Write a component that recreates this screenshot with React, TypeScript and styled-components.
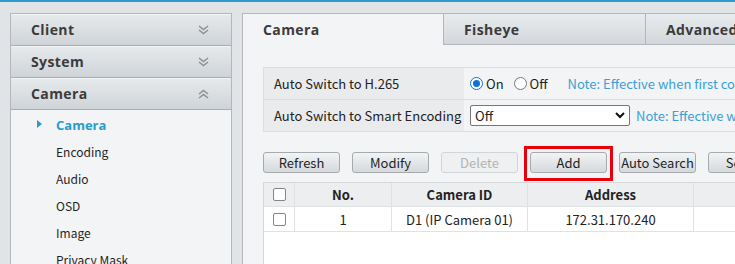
import React from "react";
import styled, { createGlobalStyle } from "styled-components";

const Global = createGlobalStyle`
  html, body { margin: 0; padding: 0; background: #e0e4e7; overflow: hidden; }
  body { font-family: "Noto Sans CJK SC", "Noto Sans", sans-serif; font-size: 13px; color: #222; }
  * { box-sizing: border-box; }
`;

const TopBar = styled.div`
  height: 2px;
  background: #2a9bcb;
`;

const Page = styled.div`
  display: flex;
  gap: 10px;
  padding: 11px 0 0 10px;
  height: 262px;
  overflow: hidden;
`;

const Sidebar = styled.div`
  width: 222px;
  flex: none;
  border: 1px solid #b3b7bb;
  border-bottom: none;
  background: #f3f4f6;
`;

const GroupHeader = styled.div`
  height: 32px;
  display: flex;
  align-items: center;
  justify-content: space-between;
  padding: 0 22px 0 20px;
  background: linear-gradient(#e7eaec, #cfd4d8);
  border-bottom: 1px solid #a8acb0;
  box-shadow: inset 0 1px 0 #f4f6f7;
  font-family: "Open Sans", sans-serif;
  font-weight: 700;
  font-size: 14px;
  letter-spacing: 0.4px;
  color: #3b3b3b;
`;

const SubList = styled.div`
  padding-top: 1px;
`;

const SubItem = styled.div<{ $active?: boolean }>`
  height: 27px;
  display: flex;
  align-items: center;
  padding-left: 45px;
  position: relative;
  color: ${(p) => (p.$active ? "#2a9bcb" : "#1f1f1f")};
  font-family: ${(p) => (p.$active ? '"Open Sans", sans-serif' : "inherit")};
  font-weight: ${(p) => (p.$active ? 700 : 400)};
  font-size: ${(p) => (p.$active ? "13px" : "12px")};
`;

const Arrow = styled.span`
  position: absolute;
  left: 26px;
  top: 9px;
  width: 0;
  height: 0;
  border-top: 4px solid transparent;
  border-bottom: 4px solid transparent;
  border-left: 5px solid #2a9bcb;
`;

const Main = styled.div`
  flex: 1;
  min-width: 0;
  border-left: 1px solid #b3b7bb;
  border-top: 1px solid #b3b7bb;
  background: #f3f4f6;
  overflow: hidden;
`;

const Inner = styled.div`
  width: 800px;
`;

const Tabs = styled.div`
  display: flex;
  height: 31px;
`;

const Tab = styled.div<{ $active?: boolean; $w: number }>`
  width: ${(p) => p.$w}px;
  flex: none;
  display: flex;
  align-items: center;
  padding-left: 20px;
  font-family: "Open Sans", sans-serif;
  font-weight: 700;
  font-size: 14px;
  letter-spacing: 0.4px;
  color: #3b3b3b;
  background: ${(p) => (p.$active ? "#f3f4f6" : "linear-gradient(#e9ecee, #d3d7db)")};
  border-left: ${(p) => (p.$active ? "none" : "1px solid #b3b7bb")};
  border-bottom: ${(p) => (p.$active ? "none" : "1px solid #b3b7bb")};
`;

const Content = styled.div`
  padding: 22px 0 0 20px;
`;

const SetTable = styled.div`
  border-top: 1px solid #dcdfe2;
  border-left: 1px solid #dcdfe2;
`;

const SetRow = styled.div`
  display: flex;
  height: 32px;
  border-bottom: 1px solid #dcdfe2;
`;

const SetLabel = styled.div`
  width: 200px;
  flex: none;
  display: flex;
  align-items: center;
  padding-left: 10px;
  background: #eaebed;
`;

const SetValue = styled.div`
  flex: 1;
  display: flex;
  align-items: center;
  padding-left: 6px;
  white-space: nowrap;
`;

const Radio = styled.span<{ $on?: boolean }>`
  width: 13px;
  height: 13px;
  border-radius: 50%;
  border: 1px solid ${(p) => (p.$on ? "#0b72d9" : "#767676")};
  background: #fff;
  display: inline-flex;
  align-items: center;
  justify-content: center;
  margin-right: 3px;
  &::after {
    content: "";
    display: ${(p) => (p.$on ? "block" : "none")};
    width: 7px;
    height: 7px;
    border-radius: 50%;
    background: #0b72d9;
  }
`;

const RadioLabel = styled.span`
  margin-right: 10px;
`;

const Note = styled.span<{ $gap: number }>`
  color: #3a9fd4;
  margin-left: ${(p) => p.$gap}px;
`;

const Select = styled.div`
  width: 160px;
  height: 21px;
  border: 1px solid #767676;
  border-radius: 2px;
  background: #fff;
  display: flex;
  align-items: center;
  justify-content: space-between;
  padding: 0 4px 0 4px;
`;

const Buttons = styled.div`
  display: flex;
  gap: 12px;
  margin-top: 20px;
`;

const Button = styled.div<{ $disabled?: boolean; $marked?: boolean }>`
  position: relative;
  width: 77px;
  height: 21px;
  flex: none;
  display: flex;
  align-items: center;
  justify-content: center;
  border: 1px solid ${(p) => (p.$disabled ? "#d2d5d8" : "#a6aaae")};
  border-radius: 3px;
  background: ${(p) => (p.$disabled ? "#eef0f1" : "linear-gradient(#f2f4f5, #d5d9dc)")};
  color: ${(p) => (p.$disabled ? "#b3b3b3" : "#1f1f1f")};
  white-space: nowrap;
  &::after {
    content: "";
    display: ${(p) => (p.$marked ? "block" : "none")};
    position: absolute;
    left: -7px;
    right: -7px;
    top: -7px;
    bottom: -9px;
    border: 3px solid #e8000b;
  }
`;

const Grid = styled.div`
  margin-top: 9px;
  background: #fff;
  border-left: 1px solid #d5d8db;
  height: 100px;
`;

const GridRow = styled.div<{ $head?: boolean }>`
  display: grid;
  grid-template-columns: 31px 97px 136px 166px 120px;
  height: 25px;
  background: ${(p) => (p.$head ? "#eceef0" : "#fff")};
  border-top: ${(p) => (p.$head ? "1px solid #d5d8db" : "none")};
  border-bottom: 1px solid #dfe2e5;
  font-weight: ${(p) => (p.$head ? 700 : 400)};
`;

const Cell = styled.div`
  display: flex;
  align-items: center;
  justify-content: center;
  border-right: 1px solid #dfe2e5;
  white-space: nowrap;
`;

const Check = styled.span`
  width: 13px;
  height: 13px;
  border: 1px solid #858585;
  border-radius: 2px;
  background: #fff;
`;

const Chevrons = ({ up }: { up?: boolean }) => (
  <svg width="11" height="10" viewBox="0 0 11 10">
    <g fill="none" stroke="#8a8f94" strokeWidth="1.4" transform={up ? "rotate(180 5.5 5)" : undefined}>
      <polyline points="1,1 5.5,4.5 10,1" />
      <polyline points="1,5 5.5,8.5 10,5" />
    </g>
  </svg>
);

const Caret = () => (
  <svg width="10" height="7" viewBox="0 0 10 7">
    <polyline points="1,1 5,5 9,1" fill="none" stroke="#111" strokeWidth="2" />
  </svg>
);

export default function App() {
  return (
    <>
      <Global />
      <TopBar />
      <Page>
        <Sidebar>
          <GroupHeader>Client<Chevrons /></GroupHeader>
          <GroupHeader>System<Chevrons /></GroupHeader>
          <GroupHeader>Camera<Chevrons up /></GroupHeader>
          <SubList>
            <SubItem $active><Arrow />Camera</SubItem>
            <SubItem>Encoding</SubItem>
            <SubItem>Audio</SubItem>
            <SubItem>OSD</SubItem>
            <SubItem>Image</SubItem>
            <SubItem>Privacy Mask</SubItem>
          </SubList>
        </Sidebar>
        <Main>
          <Inner>
            <Tabs>
              <Tab $active $w={200}>Camera</Tab>
              <Tab $w={202}>Fisheye</Tab>
              <Tab $w={200}>Advanced</Tab>
            </Tabs>
            <Content>
              <SetTable>
                <SetRow>
                  <SetLabel>Auto Switch to H.265</SetLabel>
                  <SetValue>
                    <Radio $on /><RadioLabel>On</RadioLabel>
                    <Radio /><RadioLabel>Off</RadioLabel>
                    <Note $gap={10}>Note: Effective when first connected.</Note>
                  </SetValue>
                </SetRow>
                <SetRow>
                  <SetLabel>Auto Switch to Smart Encoding</SetLabel>
                  <SetValue>
                    <Select>Off<Caret /></Select>
                    <Note $gap={6}>Note: Effective when first connected.</Note>
                  </SetValue>
                </SetRow>
              </SetTable>
              <Buttons>
                <Button>Refresh</Button>
                <Button>Modify</Button>
                <Button $disabled>Delete</Button>
                <Button $marked>Add</Button>
                <Button>Auto Search</Button>
                <Button>Search</Button>
              </Buttons>
              <Grid>
                <GridRow $head>
                  <Cell><Check /></Cell>
                  <Cell>No.</Cell>
                  <Cell>Camera ID</Cell>
                  <Cell>Address</Cell>
                  <Cell>Port</Cell>
                </GridRow>
                <GridRow>
                  <Cell><Check /></Cell>
                  <Cell>1</Cell>
                  <Cell>D1 (IP Camera 01)</Cell>
                  <Cell>172.31.170.240</Cell>
                  <Cell>80</Cell>
                </GridRow>
              </Grid>
            </Content>
          </Inner>
        </Main>
      </Page>
    </>
  );
}
